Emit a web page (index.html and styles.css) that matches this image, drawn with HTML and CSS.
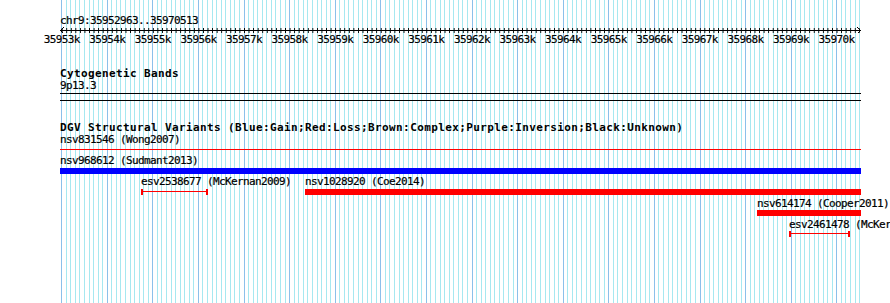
FILE: index.html
```html
<!DOCTYPE html>
<html>
<head>
<meta charset="utf-8">
<title>chr9:35952963..35970513</title>
<link rel="stylesheet" href="styles.css">
</head>
<body>
<div class="panel">
  <div class="chrom">chr9:35952963..35970513</div>
  <svg class="ruler" width="802" height="7" viewBox="0 0 802 7">
    <defs>
      <pattern id="tk" x="1.7" y="0" width="4.558" height="7" patternUnits="userSpaceOnUse">
        <rect x="0" y="1" width="1" height="5" fill="#000"/>
      </pattern>
    </defs>
    <rect x="1" y="0" width="799" height="7" fill="url(#tk)"/>
    <rect x="0" y="3" width="801" height="1" fill="#000"/>
    <path d="M3.5 0.5 L0.5 3.5 L3.5 6.5 M797.5 0.5 L800.5 3.5 L797.5 6.5" fill="none" stroke="#000" stroke-width="1"/>
  </svg>
  <div class="scale">
    <span>35953k</span><span>35954k</span><span>35955k</span><span>35956k</span><span>35957k</span><span>35958k</span>
    <span>35959k</span><span>35960k</span><span>35961k</span><span>35962k</span><span>35963k</span><span>35964k</span>
    <span>35965k</span><span>35966k</span><span>35967k</span><span>35968k</span><span>35969k</span><span>35970k</span>
  </div>

  <section class="track cyto">
    <div class="track-title">Cytogenetic Bands</div>
    <div class="label">9p13.3</div>
    <div class="rule black band-line"></div>
  </section>
  <div class="rule black sep"></div>

  <section class="track dgv">
    <div class="track-title">DGV Structural Variants (Blue:Gain;Red:Loss;Brown:Complex;Purple:Inversion;Black:Unknown)</div>
    <div class="label">nsv831546 (Wong2007)</div>
    <div class="rule red thin-red"></div>
    <div class="label gain-label">nsv968612 (Sudmant2013)</div>
    <div class="bar blue"></div>

    <div class="feat-row row1">
      <div class="feature" style="margin-left:81px;width:67px">
        <div class="label">esv2538677 (McKernan2009)</div>
        <div class="span-line"></div>
      </div>
      <div class="feature" style="margin-left:97px;width:556px">
        <div class="label">nsv1028920 (Coe2014)</div>
        <div class="bar red"></div>
      </div>
    </div>
    <div class="feat-row row2">
      <div class="feature" style="margin-left:697px;width:104px">
        <div class="label">nsv614174 (Cooper2011)</div>
        <div class="bar red"></div>
      </div>
    </div>
    <div class="feat-row row3">
      <div class="feature" style="margin-left:729px;width:61px">
        <div class="label">esv2461478 (McKernan2009)</div>
        <div class="span-line"></div>
      </div>
    </div>
  </section>
</div>
</body>
</html>
```
FILE: styles.css
```css
html, body {
  margin: 0;
  padding: 0;
  background: #ffffff;
  overflow: hidden;
}

body {
  width: 890px;
  height: 303px;
  font-family: "DejaVu Sans Mono", monospace;
  font-size: 11px;
  line-height: 12px;
  letter-spacing: -0.62px;
  color: #000;
  -webkit-text-stroke: 0.2px #000;
}

.panel {
  --mn: #a6e8f0;
  --mj: #8cc0ea;
  margin-left: 60px;
  width: 800px;
  height: 303px;
  box-sizing: border-box;
  padding-top: 15px;
  display: flex;
  flex-direction: column;
  background-image:
    repeating-linear-gradient(to right,
      transparent 0 1px, var(--mj) 1px 2px,
      transparent 2px 47px, var(--mj) 47px 48px,
      transparent 48px 92px, var(--mj) 92px 93px,
      transparent 93px 138px, var(--mj) 138px 139px,
      transparent 139px 184px, var(--mj) 184px 185px,
      transparent 185px 228px),
    repeating-linear-gradient(to right,
      transparent 0 1px, var(--mn) 1px 2px,
      transparent 2px 6px, var(--mn) 6px 7px,
      transparent 7px 10px, var(--mn) 10px 11px,
      transparent 11px 15px, var(--mn) 15px 16px,
      transparent 16px 19px, var(--mn) 19px 20px,
      transparent 20px 24px, var(--mn) 24px 25px,
      transparent 25px 29px, var(--mn) 29px 30px,
      transparent 30px 33px, var(--mn) 33px 34px,
      transparent 34px 38px, var(--mn) 38px 39px,
      transparent 39px 42px, var(--mn) 42px 43px,
      transparent 43px 51px, var(--mn) 51px 52px,
      transparent 52px 56px, var(--mn) 56px 57px,
      transparent 57px 60px, var(--mn) 60px 61px,
      transparent 61px 65px, var(--mn) 65px 66px,
      transparent 66px 70px, var(--mn) 70px 71px,
      transparent 71px 74px, var(--mn) 74px 75px,
      transparent 75px 79px, var(--mn) 79px 80px,
      transparent 80px 83px, var(--mn) 83px 84px,
      transparent 84px 88px, var(--mn) 88px 89px,
      transparent 89px 97px, var(--mn) 97px 98px,
      transparent 98px 101px, var(--mn) 101px 102px,
      transparent 102px 106px, var(--mn) 106px 107px,
      transparent 107px 111px, var(--mn) 111px 112px,
      transparent 112px 115px, var(--mn) 115px 116px,
      transparent 116px 120px, var(--mn) 120px 121px,
      transparent 121px 124px, var(--mn) 124px 125px,
      transparent 125px 129px, var(--mn) 129px 130px,
      transparent 130px 133px, var(--mn) 133px 134px,
      transparent 134px 142px, var(--mn) 142px 143px,
      transparent 143px 147px, var(--mn) 147px 148px,
      transparent 148px 152px, var(--mn) 152px 153px,
      transparent 153px 156px, var(--mn) 156px 157px,
      transparent 157px 161px, var(--mn) 161px 162px,
      transparent 162px 165px, var(--mn) 165px 166px,
      transparent 166px 170px, var(--mn) 170px 171px,
      transparent 171px 174px, var(--mn) 174px 175px,
      transparent 175px 179px, var(--mn) 179px 180px,
      transparent 180px 188px, var(--mn) 188px 189px,
      transparent 189px 193px, var(--mn) 193px 194px,
      transparent 194px 197px, var(--mn) 197px 198px,
      transparent 198px 202px, var(--mn) 202px 203px,
      transparent 203px 206px, var(--mn) 206px 207px,
      transparent 207px 211px, var(--mn) 211px 212px,
      transparent 212px 215px, var(--mn) 215px 216px,
      transparent 216px 220px, var(--mn) 220px 221px,
      transparent 221px 225px, var(--mn) 225px 226px,
      transparent 226px 228px);
}

.chrom {
  white-space: nowrap;
}

.ruler {
  display: block;
  overflow: visible;
  shape-rendering: crispEdges;
}

.scale {
  display: flex;
  margin-left: -21.09px;
  white-space: nowrap;
}

.scale span {
  flex: 0 0 45.58px;
  text-align: center;
}

.track {
  display: flex;
  flex-direction: column;
}

.track-title {
  font-weight: bold;
  font-size: 11px;
  line-height: 13px;
  letter-spacing: 0.38px;
  white-space: nowrap;
  -webkit-text-stroke: 0;
}

.cyto {
  margin-top: 21px;
}

.dgv {
  margin-top: 20px;
}

.label {
  white-space: nowrap;
}

.rule {
  width: 801px;
  height: 1px;
  flex: none;
}

.rule.black {
  background: #000;
}

.rule.red {
  background: #ff0000;
}

.band-line {
  margin-top: 1px;
}

.sep {
  margin-top: 6px;
}

.thin-red {
  margin-top: 3px;
}

.gain-label {
  margin-top: 5px;
}

.bar {
  height: 6px;
  flex: none;
}

.bar.blue {
  width: 801px;
  margin-top: 1px;
  background: #0000ff;
}

.bar.red {
  background: #ff0000;
}

.feat-row {
  display: flex;
  align-items: flex-start;
}

.feature {
  display: flex;
  flex-direction: column;
  flex: none;
}

.row1 {
  margin-top: 2px;
}

.row1 .bar,
.row1 .span-line {
  margin-top: 1px;
}

.row2 {
  margin-top: 3px;
}

.row3 {
  margin-top: 3px;
}

.span-line {
  height: 6px;
  box-sizing: border-box;
  border-left: 2px solid #ff0000;
  border-right: 2px solid #ff0000;
  background: linear-gradient(#ff0000, #ff0000) 0 2px / 100% 1px no-repeat;
}
```
